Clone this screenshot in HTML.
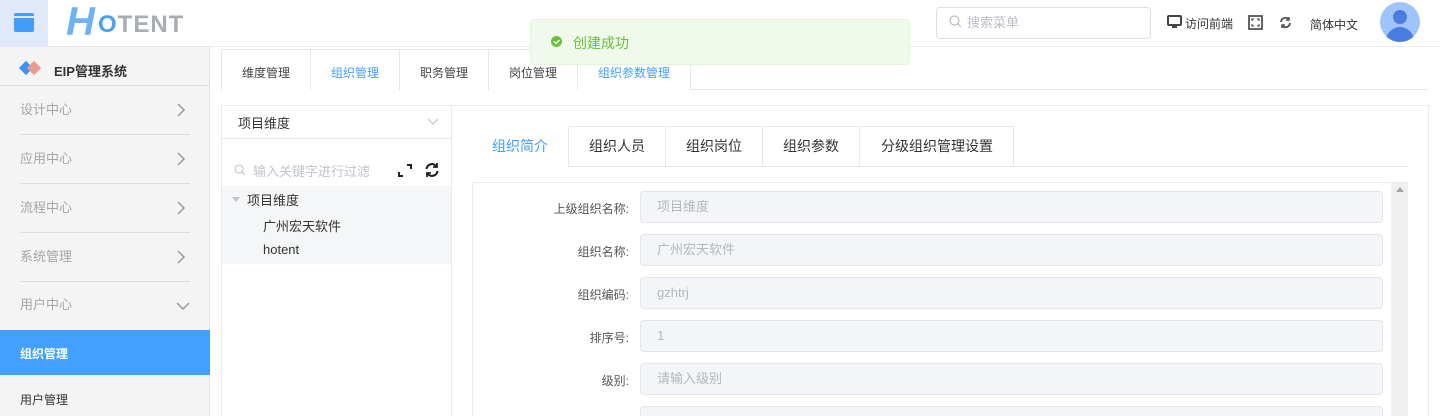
<!DOCTYPE html>
<html><head><meta charset="utf-8"><style>
*{box-sizing:border-box;margin:0;padding:0}
html,body{width:1440px;height:416px;overflow:hidden}
body{background:#fff;font-family:"Liberation Sans","Noto Sans CJK SC",sans-serif;font-size:13px;color:#333;position:relative}
#wrap{position:absolute;left:0;top:0;width:1440px;height:416px;overflow:hidden}
.abs{position:absolute}
.hdr{left:0;top:0;width:1440px;height:47px;background:#fff;border-bottom:1px solid #e8eaef}
.side{left:0;top:47px;width:210px;height:369px;background:#f4f4f4;border-right:1px solid #e6e6e6}
.mi{position:absolute;left:20px;width:170px;height:49px;line-height:48px;color:#a6a6a6;font-size:13px;border-bottom:1px solid #ddd}
.mi svg{position:absolute;right:4px;top:17px}
.tab{position:absolute;top:49px;height:41px;line-height:46px;text-align:center;border:1px solid #e4e7ed;border-bottom:none;font-size:12px;color:#444;background:#fff}
.rt{position:absolute;top:126px;height:41px;line-height:40px;text-align:center;border-right:1px solid #e4e7ed;font-size:14px;color:#333}
.lbl{position:absolute;right:811px;font-size:12px;color:#555;text-align:right}
.inp{position:absolute;left:640px;width:743px;height:32px;background:#f4f5f8;border:1px solid #e3e5ea;border-radius:4px;padding-left:16px;line-height:30px;color:#b4b7bd;font-size:13px}
</style></head><body><div id="wrap">
<div class="abs hdr"></div>
<div class="abs" style="left:0;top:0;width:48px;height:47px;background:#dfe9fa"></div>
<div class="abs" style="left:14px;top:13px;width:20px;height:19px;background:#419ef8;border-radius:2px"></div>
<div class="abs" style="left:14px;top:16px;width:20px;height:2px;background:#dfe9fa"></div>
<div class="abs" style="left:66px;top:2px;font-size:40px;font-weight:bold;font-style:italic;color:#6db2f5;line-height:40px">H</div>
<div class="abs" style="left:98px;top:12px;font-size:24px;font-weight:bold;line-height:26px;letter-spacing:1px"><span style="color:#4d9ff0">O</span><span style="color:#a8acb3">TENT</span></div>
<div class="abs" style="left:936px;top:7px;width:215px;height:32px;border:1px solid #dcdfe6;border-radius:4px"></div>
<svg class="abs" style="left:949px;top:15px" width="13" height="13" viewBox="0 0 13 13"><circle cx="5.5" cy="5.5" r="4.5" fill="none" stroke="#b8bcc4" stroke-width="1.2"/><path d="M9 9l3 3" stroke="#b8bcc4" stroke-width="1.2"/></svg>
<div class="abs" style="left:967px;top:12px;color:#bbbfc6;font-size:13px">搜索菜单</div>
<svg class="abs" style="left:1167px;top:15px" width="15" height="14" viewBox="0 0 15 14"><rect x="1" y="1" width="13" height="9" rx="1" fill="none" stroke="#444" stroke-width="2"/><path d="M5 12h5" stroke="#444" stroke-width="2"/></svg>
<div class="abs" style="left:1185px;top:15px;font-size:12px;color:#333">访问前端</div>
<svg class="abs" style="left:1248px;top:15px" width="15" height="15" viewBox="0 0 15 15"><rect x="1" y="1" width="13" height="13" fill="none" stroke="#555" stroke-width="1.8"/><path d="M4 6V4h2M9 4h2v2M11 9v2H9M6 11H4V9" fill="none" stroke="#555" stroke-width="1.2"/></svg>
<svg class="abs" style="left:1279px;top:16px" width="13" height="13" viewBox="0 0 13 13"><path d="M2 6a4.5 4.5 0 0 1 8-2.5M11 7a4.5 4.5 0 0 1-8 2.5" fill="none" stroke="#555" stroke-width="1.8"/><path d="M10 1v3H7M3 12V9h3" fill="none" stroke="#555" stroke-width="1.5"/></svg>
<div class="abs" style="left:1310px;top:16px;font-size:12px;color:#333">简体中文</div>
<div class="abs" style="left:1380px;top:2px;width:40px;height:40px;border-radius:50%;background:#9fc3fb;overflow:hidden"><div class="abs" style="left:13px;top:8px;width:14px;height:14px;border-radius:50%;background:#4a7de0"></div><div class="abs" style="left:6px;top:25px;width:28px;height:15px;border-radius:14px 14px 0 0;background:#4a7de0"></div></div>

<div class="abs side"></div>
<div class="abs" style="left:0;top:85px;width:210px;height:1px;background:#ddd"></div>
<div class="abs" style="left:21px;top:63px;width:10px;height:10px;background:#3e91f7;transform:rotate(45deg)"></div>
<div class="abs" style="left:29px;top:63px;width:10px;height:10px;background:#ea9a8e;transform:rotate(45deg)"></div>
<div class="abs" style="left:54px;top:61px;font-size:13px;font-weight:bold;color:#333">EIP管理系统</div>
<div class="mi" style="top:86px">设计中心<svg width="10" height="14" viewBox="0 0 10 14"><path d="M2 1l6 6-6 6" fill="none" stroke="#999" stroke-width="1.5"/></svg></div>
<div class="mi" style="top:135px">应用中心<svg width="10" height="14" viewBox="0 0 10 14"><path d="M2 1l6 6-6 6" fill="none" stroke="#999" stroke-width="1.5"/></svg></div>
<div class="mi" style="top:184px">流程中心<svg width="10" height="14" viewBox="0 0 10 14"><path d="M2 1l6 6-6 6" fill="none" stroke="#999" stroke-width="1.5"/></svg></div>
<div class="mi" style="top:233px">系统管理<svg width="10" height="14" viewBox="0 0 10 14"><path d="M2 1l6 6-6 6" fill="none" stroke="#999" stroke-width="1.5"/></svg></div>
<div class="mi" style="top:281px;border-bottom:none">用户中心<svg style="top:20px;right:0" width="14" height="10" viewBox="0 0 14 10"><path d="M1 2l6 6 6-6" fill="none" stroke="#999" stroke-width="1.5"/></svg></div>
<div class="abs" style="left:0;top:330px;width:210px;height:45px;background:#42a0ff;color:#fff;font-weight:bold;font-size:12px;line-height:48px;padding-left:20px">组织管理</div>
<div class="abs" style="left:20px;top:391px;font-size:12px;color:#333">用户管理</div>

<div class="abs" style="left:222px;top:89px;width:1206px;height:1px;background:#e4e7ed"></div>
<div class="tab" style="left:221px;width:90px">维度管理</div>
<div class="tab" style="left:310px;width:90px;color:#409eff;height:41px">组织管理</div>
<div class="tab" style="left:399px;width:90px">职务管理</div>
<div class="tab" style="left:488px;width:90px">岗位管理</div>
<div class="tab" style="left:577px;width:114px;color:#409eff">组织参数管理</div>

<div class="abs" style="left:221px;top:105px;width:1208px;height:311px;border:1px solid #e8eaef;border-bottom:none"></div>
<div class="abs" style="left:451px;top:105px;width:1px;height:311px;background:#e8eaef"></div>
<div class="abs" style="left:222px;top:138px;width:229px;height:1px;background:#e4e7ed"></div>
<div class="abs" style="left:238px;top:113px;font-size:13px;color:#333">项目维度</div>
<svg class="abs" style="left:427px;top:118px" width="12" height="8" viewBox="0 0 12 8"><path d="M1 1l5 5 5-5" fill="none" stroke="#c0c4cc" stroke-width="1.2"/></svg>
<svg class="abs" style="left:234px;top:164px" width="12" height="12" viewBox="0 0 12 12"><circle cx="5" cy="5" r="4" fill="none" stroke="#c0c4cc" stroke-width="1.1"/><path d="M8 8l3 3" stroke="#c0c4cc" stroke-width="1.1"/></svg>
<div class="abs" style="left:253px;top:161px;font-size:13px;color:#c0c4cc">输入关键字进行过滤</div>
<svg class="abs" style="left:398px;top:164px" width="14" height="13" viewBox="0 0 14 13"><path d="M1 8v4h4M9 1h4v4" fill="none" stroke="#222" stroke-width="2"/></svg>
<svg class="abs" style="left:424px;top:162px" width="16" height="16" viewBox="0 0 16 16"><path d="M2.5 7a5.5 5.5 0 0 1 10-2.5M13.5 9a5.5 5.5 0 0 1-10 2.5" fill="none" stroke="#222" stroke-width="2.2"/><path d="M13 1v4H9M3 15v-4h4" fill="none" stroke="#222" stroke-width="1.8"/></svg>
<div class="abs" style="left:222px;top:186px;width:229px;height:78px;background:#f5f6f7"></div>
<div class="abs" style="left:232px;top:197px;width:0;height:0;border-left:4px solid transparent;border-right:4px solid transparent;border-top:5px solid #c0c4cc"></div>
<div class="abs" style="left:247px;top:190px;font-size:13px;color:#333">项目维度</div>
<div class="abs" style="left:263px;top:216px;font-size:13px;color:#333">广州宏天软件</div>
<div class="abs" style="left:263px;top:242px;font-size:13px;color:#333">hotent</div>

<div class="abs" style="left:472px;top:166px;width:936px;height:1px;background:#e4e7ed"></div>
<div class="abs" style="left:472px;top:126px;width:542px;height:41px;border:1px solid #e4e7ed;border-bottom:none"></div>
<div class="rt" style="left:472px;width:97px;color:#409eff;background:#fff;height:41px">组织简介</div>
<div class="rt" style="left:569px;width:97px">组织人员</div>
<div class="rt" style="left:666px;width:97px">组织岗位</div>
<div class="rt" style="left:763px;width:97px">组织参数</div>
<div class="rt" style="left:860px;width:154px;border-right:none">分级组织管理设置</div>

<div class="abs" style="left:472px;top:182px;width:936px;height:234px;border:1px solid #e8eaef;border-bottom:none"></div>
<div class="abs" style="left:1391px;top:183px;width:17px;height:233px;background:#f0f0f0"></div>
<div class="abs" style="left:1396px;top:187px;width:0;height:0;border-left:4px solid transparent;border-right:4px solid transparent;border-bottom:5px solid #a3a3a3"></div>

<div class="lbl" style="top:200px">上级组织名称:</div><div class="inp" style="top:191px">项目维度</div>
<div class="lbl" style="top:243px">组织名称:</div><div class="inp" style="top:234px">广州宏天软件</div>
<div class="lbl" style="top:286px">组织编码:</div><div class="inp" style="top:277px">gzhtrj</div>
<div class="lbl" style="top:329px">排序号:</div><div class="inp" style="top:320px">1</div>
<div class="lbl" style="top:372px">级别:</div><div class="inp" style="top:363px">请输入级别</div>
<div class="inp" style="top:406px;height:10px;border-bottom:none;border-radius:4px 4px 0 0"></div>

<div class="abs" style="left:530px;top:19px;width:380px;height:46px;background:#f0f9eb;border:1px solid #e1f3d8;border-radius:4px"></div>
<div class="abs" style="left:551px;top:36px;width:11px;height:11px;border-radius:50%;background:#67c23a"></div>
<svg class="abs" style="left:551px;top:36px" width="11" height="11" viewBox="0 0 11 11"><path d="M3 5.5l2 2 3.5-3.5" fill="none" stroke="#fff" stroke-width="1.4"/></svg>
<div class="abs" style="left:573px;top:33px;font-size:14px;color:#67c23a">创建成功</div>
</div></body></html>
